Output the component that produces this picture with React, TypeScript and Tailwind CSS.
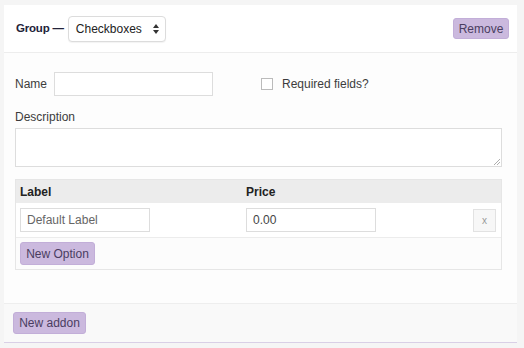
const btn =
  "bg-[#cbb9de] text-[#4a3d61] border border-[#c2aed8] rounded-[3px] text-[12px] leading-none";

const App = () => {
  return (
    <div
      className="w-[524px] h-[348px] bg-[#f5f5f5] pt-[5px] pl-[4px] pr-[7px] text-[#3c3c3c] text-[12px]"
      style={{ fontFamily: '"Liberation Sans", Arial, sans-serif' }}
    >
      <div className="bg-white">
        <div className="h-[48px] flex items-center justify-between pl-[12px] pr-[8px] border-b border-[#ededed]">
          <div className="flex items-center">
            <span className="font-bold text-[11.5px] tracking-[-0.2px] text-[#23233a]">Group —</span>
            <div className="ml-[4px] w-[98px] h-[26px] border border-[#dcdcdc] rounded-[4px] bg-white flex items-center justify-between pl-[7px] pr-[6px] shadow-[0_1px_1px_rgba(0,0,0,0.05)]">
              <span className="text-[12px] text-[#222]">Checkboxes</span>
              <svg width="6" height="10" viewBox="0 0 6 10">
                <path d="M3 0 L6 4 L0 4 Z" fill="#333" />
                <path d="M3 10 L6 6 L0 6 Z" fill="#333" />
              </svg>
            </div>
          </div>
          <button className={`${btn} w-[56px] h-[21px]`}>Remove</button>
        </div>

        <div className="bg-[#fdfdfd] pl-[11px] pr-[15px] pt-[19px] pb-[33px] border-b border-[#eeeeee]">
          <div className="flex items-center h-[24px]">
            <span className="w-[39px]">Name</span>
            <div className="w-[159px] h-[24px] border border-[#dddddd] bg-white" />
            <div className="ml-[48px] w-[12px] h-[12px] border border-[#bbbbbb] bg-white" />
            <span className="ml-[9px]">Required fields?</span>
          </div>
          <div className="mt-[14px] leading-[14px]">Description</div>
          <div className="mt-[4px] h-[39px] border border-[#dddddd] bg-white relative">
            <svg className="absolute right-[1px] bottom-[1px]" width="6" height="6" viewBox="0 0 6 6">
              <path d="M0 6 L6 0 M3 6 L6 3" stroke="#999" strokeWidth="0.8" />
            </svg>
          </div>
          <div className="mt-[12px] border border-[#e6e6e6]">
            <div className="h-[23px] bg-[#ececec] flex items-center font-bold text-[#222]">
              <span className="pl-[4px] w-[230px]">Label</span>
              <span>Price</span>
            </div>
            <div className="h-[35px] flex items-center pl-[4px] pr-[5px] border-b border-[#ececec] bg-white">
              <div className="w-[130px] h-[24px] border border-[#dddddd] bg-white flex items-center pl-[6px] text-[#666]">
                Default Label
              </div>
              <div className="ml-[96px] w-[130px] h-[24px] border border-[#dddddd] bg-white flex items-center pl-[6px] text-[#444]">
                0.00
              </div>
              <div className="ml-auto w-[23px] h-[23px] border border-[#e2e2e2] bg-[#f7f7f7] flex items-center justify-center text-[#999] text-[10px]">
                x
              </div>
            </div>
            <div className="h-[31px] flex items-center pl-[4px] bg-[#fcfcfc]">
              <button className={`${btn} w-[75px] h-[23px]`}>New Option</button>
            </div>
          </div>
        </div>

        <div className="h-[39px] bg-[#f9f9f9] flex items-center pl-[9px] border-b border-[#d9cfe6]">
          <button className={`${btn} w-[73px] h-[22px]`}>New addon</button>
        </div>
      </div>
    </div>
  );
};

export default App;
